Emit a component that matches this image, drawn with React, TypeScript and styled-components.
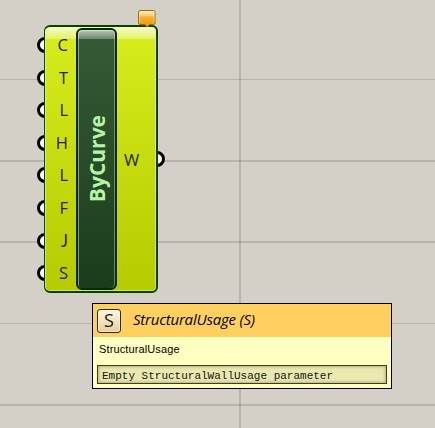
import React from 'react';
import styled, { createGlobalStyle } from 'styled-components';

const GlobalStyle = createGlobalStyle`
  *, *::before, *::after { box-sizing: border-box; }
  body { margin: 0; overflow: hidden; }
`;

const Canvas = styled.main`
  position: relative;
  width: 435px;
  height: 428px;
  overflow: hidden;
  background: #d4d0c8;
  font-family: 'Open Sans', 'Noto Sans', sans-serif;
`;

const GridLine = styled.div<{ $at: number; $size: number; $vertical?: boolean }>`
  position: absolute;
  background: rgba(0, 0, 0, 0.13);
  ${p => p.$vertical
    ? `left: ${p.$at}px; width: ${p.$size}px; top: 0; bottom: 0;`
    : `top: ${p.$at}px; height: ${p.$size}px; left: 0; right: 0;`}
`;

const Node = styled.section`
  position: absolute;
  left: 44px;
  top: 25px;
  width: 114px;
  height: 268px;
  display: flex;
`;

const NodeBody = styled.div`
  position: relative;
  display: flex;
  width: 100%;
  padding: 1px;
  border: 1.5px solid #073f0d;
  border-width: 2px 2px 2px 1px;
  border-radius: 6px;
  background:
    linear-gradient(rgba(255, 255, 255, 0.78), rgba(255, 255, 255, 0.32)) 0 0 / 100% 12px no-repeat,
    linear-gradient(#d8ed1c, #b6cb00);
  box-shadow: inset 0 0 0 1px rgba(235, 255, 130, 0.55);
`;

const Inputs = styled.div`
  display: flex;
  flex-direction: column;
  width: 30px;
  padding: 1px 8px 0 0;
`;

const Label = styled.span<{ $face?: string }>`
  height: 32.6px;
  ${p => p.$face && `font-family: '${p.$face}', sans-serif;`}
  font-size: 16.5px;
  line-height: 32.6px;
  text-align: right;
  color: #1c2400;
`;

const Core = styled.div`
  display: flex;
  align-items: center;
  justify-content: center;
  width: 41px;
  height: 262px;
  border: 2px solid #06290c;
  border-radius: 6px;
  background:
    linear-gradient(rgba(255, 255, 255, 0.65), rgba(255, 255, 255, 0.28)) 0 0 / 100% 9px no-repeat,
    linear-gradient(#375b36, #1b3c1b);
  box-shadow: inset 1px 1px 0 rgba(255, 255, 255, 0.45), inset -1px 0 0 rgba(255, 255, 255, 0.36);
`;

const CoreName = styled.span`
  writing-mode: vertical-rl;
  transform: rotate(180deg);
  font-size: 21px;
  font-weight: 700;
  line-height: 26px;
  color: #b5f5a5;
`;

const Output = styled.div`
  display: flex;
  align-items: center;
  padding: 2px 0 0 7px;
`;

const Port = styled.i<{ $y: number; $side: 'in' | 'out' }>`
  position: absolute;
  left: ${p => (p.$side === 'in' ? -7 : 105)}px;
  top: ${p => p.$y}px;
  width: 16px;
  height: 16px;
  border: 3px solid #000;
  border-radius: 50%;
  background: #fff;
`;

const Balloon = styled.svg`
  position: absolute;
  left: 137px;
  top: 9px;
`;

const Tooltip = styled.aside`
  position: absolute;
  left: 92px;
  top: 303px;
  width: 300px;
  height: 86px;
  border: 1px solid #000;
  background: #ffffc1;
`;

const TipHeader = styled.header`
  display: flex;
  align-items: center;
  gap: 12px;
  height: 33px;
  padding-left: 4px;
  background: #ffd05f;
`;

const Badge = styled.span`
  display: grid;
  place-items: center;
  width: 24px;
  height: 24px;
  border: 1px solid #292929;
  border-radius: 3px;
  background: linear-gradient(#fff4dc 0, #f4e5c1 45%, #e9cf94);
  box-shadow: inset 0 0 0 1px rgba(255, 255, 255, 0.5);
  font-size: 18px;
  line-height: 20px;
  color: #181818;
  & > b { font-weight: 400; margin-top: -2px; }
`;

const TipTitle = styled.strong`
  margin-top: -3px;
  font-size: 15px;
  letter-spacing: -0.22px;
  font-weight: 400;
  font-style: italic;
  line-height: 30px;
  color: #000;
  white-space: nowrap;
`;

const TipText = styled.p`
  margin: 0;
  padding: 5px 6px 0;
  font: 11px/14px 'Liberation Sans', sans-serif;
  letter-spacing: 0.12px;
  color: #000;
`;

const TipValue = styled.output`
  display: block;
  width: 290px;
  height: 19px;
  margin: 9px 4px 0;
  padding-left: 4px;
  border: 1px solid #463b22;
  background: #e9e9b0;
  box-shadow: inset 0 0 3px 1px rgba(100, 100, 60, 0.4);
  font: 11px/20px 'Liberation Mono', monospace;
  color: #161616;
  white-space: nowrap;
`;

const inputs = ['C', 'T', 'L', 'H', 'L', 'F', 'J', 'S'];
const gridRows = [[79, 1], [160, 2], [241, 2], [323, 1], [404, 2]];

export default function App() {
  return (
    <>
      <GlobalStyle />
      <Canvas>
        <GridLine $vertical $at={239} $size={2} />
        {gridRows.map(([at, size]) => <GridLine key={at} $at={at} $size={size} />)}
        <Node>
          {inputs.map((_, i) => <Port key={i} $side="in" $y={12 + i * 32.6} />)}
          <Port $side="out" $y={126} />
          <NodeBody>
            <Inputs>
              {inputs.map((name, i) => (
                <Label key={i} $face={name === 'J' ? 'Lato' : undefined}>{name}</Label>
              ))}
            </Inputs>
            <Core><CoreName>ByCurve</CoreName></Core>
            <Output><Label>W</Label></Output>
          </NodeBody>
        </Node>
        <Balloon width="20" height="20" viewBox="0 0 20 20">
          <defs>
            <linearGradient id="balloon" x1="0" y1="0" x2="0" y2="1">
              <stop offset="0" stopColor="#fff3ce" />
              <stop offset=".3" stopColor="#f9ce78" />
              <stop offset=".4" stopColor="#f4b030" />
              <stop offset="1" stopColor="#ed9800" />
            </linearGradient>
          </defs>
          <path d="M3 1.5h13.500a1.500 1.500 0 0 1 1.500 1.500v11a1.500 1.500 0 0 1-1.500 1.500h-4L10.300 18 8 15.500H3A1.500 1.500 0 0 1 1.500 14V3A1.500 1.500 0 0 1 3 1.500Z" fill="url(#balloon)" stroke="#a26c09" />
          <path d="M2.500 14V2.500h14.500V14" fill="none" stroke="#ffe7a0" strokeOpacity=".6" />
        </Balloon>
        <Tooltip>
          <TipHeader>
            <Badge><b>S</b></Badge>
            <TipTitle>StructuralUsage (S)</TipTitle>
          </TipHeader>
          <TipText>StructuralUsage</TipText>
          <TipValue>Empty StructuralWallUsage parameter</TipValue>
        </Tooltip>
      </Canvas>
    </>
  );
}
